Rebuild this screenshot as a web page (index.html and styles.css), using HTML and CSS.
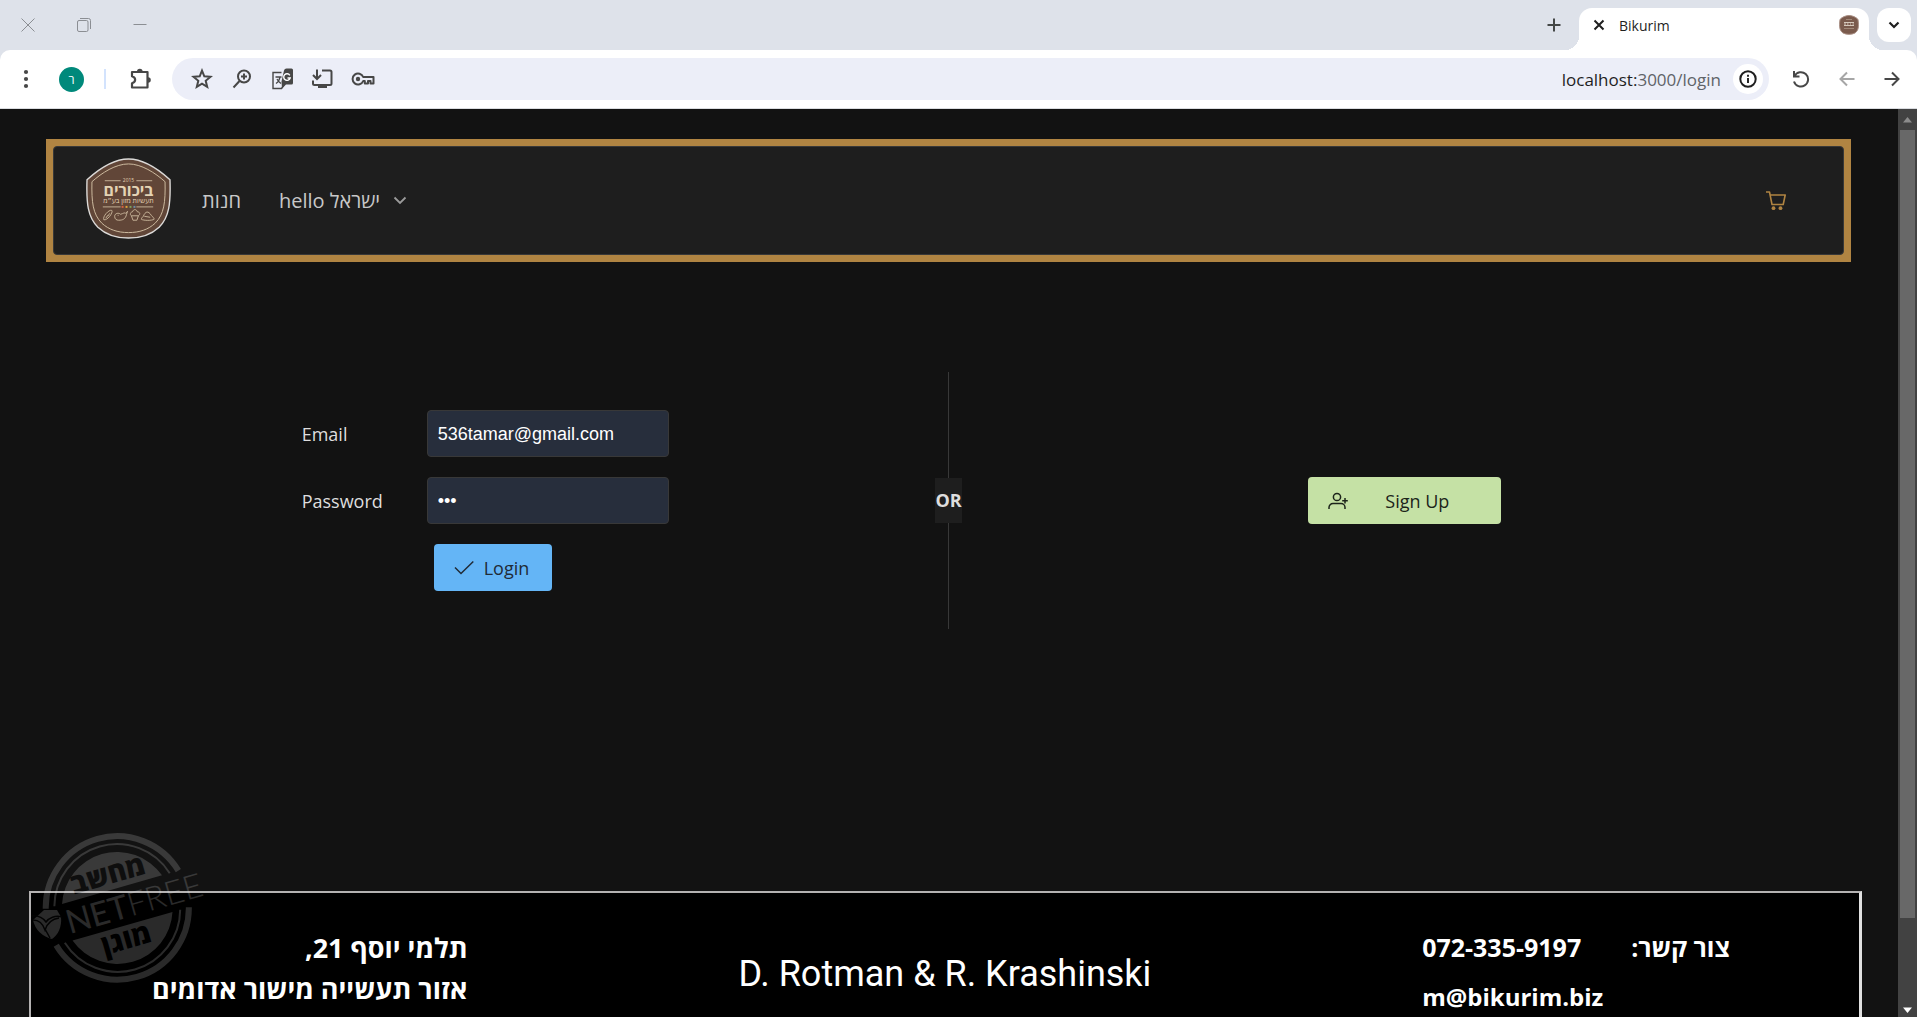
FILE: index.html
```html
<!DOCTYPE html>
<html lang="en">
<head>
<meta charset="utf-8">
<meta name="viewport" content="width=device-width, initial-scale=1">
<title>Bikurim</title>
<link rel="stylesheet" href="styles.css">
</head>
<body>
<div class="browser">
  <div class="tabstrip">
    <div class="window-controls">
      <button type="button" aria-label="Close window"><svg width="14" height="14" viewBox="0 0 14 14"><path d="M.5.5l13 13M13.5.5l-13 13"/></svg></button>
      <button type="button" aria-label="Restore window"><svg width="14" height="14" viewBox="0 0 14 14"><rect x=".5" y="2.5" width="10.500" height="11" rx="1.500"/><path d="M3 .5h8.500a2 2 0 0 1 2 2V11"/></svg></button>
      <button type="button" aria-label="Minimize window"><svg width="14" height="14" viewBox="0 0 14 14"><path d="M.5 6.500h13"/></svg></button>
    </div>
    <button type="button" class="new-tab" aria-label="New tab"><svg width="14" height="14" viewBox="0 0 14 14"><path d="M7 .5v13M.5 7h13" stroke="#444746" stroke-width="2"/></svg></button>
    <div class="tab">
      <button type="button" class="tab-close" aria-label="Close tab"><svg width="12" height="12" viewBox="0 0 12 12"><path d="M1.500 1.500l9 9M10.500 1.500l-9 9" stroke="#1f1f1f" stroke-width="2"/></svg></button>
      <span class="tab-title">Bikurim</span>
      <svg class="favicon" width="20" height="20" viewBox="0 0 20 20"><path d="M10 .5C13 .5 17 2 19 4.500c1 7 .5 11-3 13.500-3 1.800-9 1.800-12 0C.5 15.500 0 11.500 1 4.500 3 2 7 .5 10 .5z" fill="#7a5a4c" stroke="#a98f84" stroke-width="1"/><path d="M5 7.500h10M5 9h2m1 0h1.500M11 9h1m1.500 0H15M5 10.500h10" stroke="#d5c8bb" stroke-width="1.200"/><path d="M5 13.500h10M7 4.500h6" stroke="#a08878" stroke-width="1"/></svg>
    </div>
    <button type="button" class="tab-search" aria-label="Search tabs"><svg width="12" height="8" viewBox="0 0 12 8"><path d="M1.500 1.500L6 6l4.500-4.500" stroke="#1f1f1f" stroke-width="2.200"/></svg></button>
  </div>

  <div class="toolbar">
    <button type="button" class="menu" aria-label="Menu"><svg width="6" height="20" viewBox="0 0 6 20"><g fill="#474747"><circle cx="3" cy="3" r="2.100"/><circle cx="3" cy="10" r="2.100"/><circle cx="3" cy="17" r="2.100"/></g></svg></button>
    <button type="button" class="avatar">ר</button>
    <span class="toolbar-divider"></span>
    <button type="button" class="extensions" aria-label="Extensions"><svg width="22" height="22" viewBox="0 0 22 22"><path d="M2 4h15.500v15.500H2v-4.200c4.200-1.500 4.200-5.600 0-7.100z" stroke="#474747" stroke-width="2.200" stroke-linejoin="round"/><path d="M7 3.500a2.800 2.800 0 0 1 5.600 0zM18 9.200a2.800 2.800 0 0 1 0 5.600z" fill="#474747"/></svg></button>
    <div class="omnibox">
      <button type="button" aria-label="Bookmark"><svg width="22" height="22" viewBox="0 0 22 22"><path d="M11 2.600l2.300 5.700 6.200.5-4.800 4 1.500 6L11 15.600l-5.200 3.200 1.500-6-4.800-4 6.200-.5z" stroke="#474747" stroke-width="2"/></svg></button>
      <button type="button" aria-label="Zoom"><svg width="22" height="22" viewBox="0 0 22 22"><g stroke="#474747" stroke-width="2"><circle cx="13" cy="8.500" r="6"/><path d="M8.500 13L2.500 19.500M13 5.500v6M10 8.500h6"/></g></svg></button>
      <button type="button" aria-label="Translate"><svg width="22" height="22" viewBox="0 0 22 22"><path d="M10.500 4.500H2v16h8.500l2.500-3.500" stroke="#474747" stroke-width="1.400"/><path d="M13 2.500q.5-2 2.500-2h5a1.500 1.500 0 0 1 1.500 1.500v13a1.500 1.500 0 0 1-1.500 1.500H15l-4 4-.5-7z" fill="#474747"/><path d="M4.500 9h6M5 15.500c2.500-1.500 3.500-3.500 4-6.500M6 11c1 2 2.500 3.500 4 4.500" stroke="#474747" stroke-width="1.300"/><path d="M18.800 7.300a3.300 3.300 0 1 0 .4 2.700h-2.700" stroke="#fff" stroke-width="1.400"/></svg></button>
      <button type="button" aria-label="Install"><svg width="22" height="22" viewBox="0 0 22 22"><g stroke="#474747" stroke-width="2"><path d="M11 2.500h8A1.500 1.500 0 0 1 20.500 4v11.500A1.500 1.500 0 0 1 19 17H3.500A1.500 1.500 0 0 1 2 15.500V12.500M6 1.500v9M2 7l4 4 4-4"/></g><path d="M7 17h9v3H7z" fill="#474747"/></svg></button>
      <button type="button" aria-label="Passwords"><svg width="24" height="14" viewBox="0 0 24 14"><path d="M12.200 5H22.500v6.500h-3V9H17v2.500h-3.200V9h-1.600a5.500 5.500 0 1 1 0-4z" stroke="#474747" stroke-width="2" stroke-linejoin="round"/><circle cx="7" cy="7" r="2.200" fill="#474747"/></svg></button>
      <span class="url">localhost:<span class="url-path">3000/login</span></span>
      <button type="button" class="site-info" aria-label="Site information"><svg width="18" height="18" viewBox="0 0 18 18"><circle cx="9" cy="9" r="7.700" stroke="#1f1f1f" stroke-width="2"/><path d="M9 8v5M9 4.800v2" stroke="#1f1f1f" stroke-width="1.900"/></svg></button>
    </div>
    <button type="button" class="nav-button" aria-label="Reload"><svg width="18" height="18" viewBox="0 0 18 18"><path d="M2 1v5.500h5.500M2.500 6A7.200 7.200 0 1 1 2 11.500" stroke="#474747" stroke-width="2"/></svg></button>
    <button type="button" class="nav-button" aria-label="Back"><svg width="16" height="16" viewBox="0 0 16 16"><path d="M15.500 8H2M8 1.500L1.500 8 8 14.500" stroke="#a6a6a6" stroke-width="2"/></svg></button>
    <button type="button" class="nav-button" aria-label="Forward"><svg width="16" height="16" viewBox="0 0 16 16"><path d="M.5 8H14M8 1.500L14.500 8 8 14.500" stroke="#474747" stroke-width="2"/></svg></button>
  </div>

  <div class="viewport">
    <div class="page">
      <header class="navbar-frame">
        <nav class="navbar">
          <svg class="logo" width="85" height="81" viewBox="0 0 86 82" role="img" aria-label="ביכורים">
            <path d="M43 1C58 1 74 12 85 22c.8 24-.8 38-11 48-8 7.500-19 11-31 11s-23-3.500-31-11C1.800 60 .2 46 1 22 12 12 28 1 43 1z" fill="#614638" stroke="#dcdad8" stroke-width="1.400"/>
            <path d="M43 6C56 6 70 15 80 24c.5 21-1 33-10 42-7 6.500-16 9.500-27 9.500S23 72.500 16 66C7 57 5.500 45 6 24 16 15 30 6 43 6z" fill="none" stroke="#cdbb9f" stroke-width="1"/>
            <path d="M19 23h16M51 23h16M17 49.500h18M51 49.500h17" stroke="#cdbb9f" stroke-width=".9"/>
            <text x="43" y="24" font-size="5" class="logo-text">2015</text>
            <text x="43" y="38" font-size="16" class="logo-text logo-name">ביכורים</text>
            <text x="43" y="46" font-size="7" class="logo-text">תעשיות מזון בע״מ</text>
            <g><path d="M36 48.500h2v2h-2z" fill="#d8603f"/><path d="M40 48.500h2v2h-2z" fill="#e0a43c"/><path d="M44 48.500h2v2h-2z" fill="#7fa35a"/><path d="M48 48.500h2v2h-2z" fill="#6d8ea8"/></g>
            <g fill="none" stroke="#cdbb9f" stroke-width=".9" stroke-linejoin="round">
              <path d="M18 62.500c-1.500-3 5-10.500 8-9.500 2 1.500-4 10.500-8 9.500zM20 61l2-3M22 59l2-3"/>
              <path d="M29 59c0-3 4-4 6-2 3-1 4-2 5-1l2-2-1 3c-1 5-4 6-8 6-2 0-4-1-4-4zM32 58h1"/>
              <path d="M46 58.500c-2-1-1-4 1-4 1-3 4-3 5 0 3 0 3 3 1 4zM46 58.500l1.500 4.500h4l1.500-4.500"/>
              <path d="M56 62c0-1 1-2 2-3 2-5 5-6 8-1 1 1 3 3 3 4-2 1.500-11 1.500-13 0zM59 59l6 1"/>
            </g>
          </svg>
          <a class="nav-link" href="#shop" dir="rtl">חנות</a>
          <a class="nav-link user-link" href="#user"><span>hello ישראל</span><svg width="14" height="9" viewBox="0 0 14 9"><path d="M1.500 1.500L7 7l5.500-5.500" stroke="#9b9b9b" stroke-width="1.800"/></svg></a>
          <a class="cart" href="#cart" aria-label="Cart"><svg width="20" height="20" viewBox="0 0 20 20"><path d="M0 1h3.500L6 13.500h11.200L19.200 4H4.200" stroke="#b08442" stroke-width="1.600" stroke-linejoin="round"/><circle cx="7.500" cy="17.200" r="1.900" fill="#b08442"/><circle cx="14.500" cy="17.200" r="1.900" fill="#b08442"/></svg></a>
        </nav>
      </header>

      <main class="login">
        <form class="login-form">
          <label for="email">Email</label>
          <input id="email" type="email" value="536tamar@gmail.com">
          <label for="password">Password</label>
          <input id="password" type="password" value="123">
          <button class="login-button" type="button"><svg width="20" height="16" viewBox="0 0 20 16"><path d="M1 7.500L7 13.500 19.300 1.500" stroke="#212b36" stroke-width="1.500"/></svg>Login</button>
        </form>
        <div class="divider"><b>OR</b></div>
        <div class="signup">
          <button class="signup-button" type="button"><svg width="20" height="18" viewBox="0 0 20 18"><g stroke="#1c241a" stroke-width="1.500"><circle cx="9" cy="5" r="3.600"/><path d="M1 17v-1.500c0-2.200 1.700-4 4-4h8c2.300 0 4 1.800 4 4V17M17 6v5.500M14.200 8.700h5.600"/></g></svg><span>Sign Up</span></button>
        </div>
      </main>

      <footer class="footer">
        <address class="street" dir="rtl">תלמי יוסף 21,<br>אזור תעשייה מישור אדומים</address>
        <div class="owners">D. Rotman &amp; R. Krashinski</div>
        <div class="contact">
          <span>072-335-9197</span><span dir="rtl">צור קשר:</span>
          <a class="mail" href="mailto:m@bikurim.biz">m@bikurim.biz</a>
        </div>
      </footer>

      <svg class="stamp" width="180" height="152" viewBox="0 0 180 152" role="img" aria-label="NetFree">
        <g transform="translate(87 76)" fill="none" stroke="#e8e8e8">
          <g transform="rotate(-16)">
            <path d="M-69 -18A71.500 71.500 0 0 1 69 -18M-69 20A71.500 71.500 0 0 0 69 20" stroke-width="6"/>
            <path d="M-60 -18A62.500 62.500 0 0 1 60 -18M-60 20A62.500 62.500 0 0 0 60 20" stroke-width="2"/>
            <path d="M-52 -18A55 55 0 0 1 52 -18zM-52 20A55 55 0 0 0 52 20z" fill="#e8e8e8" stroke="none"/>
            <text x="0" y="-24" class="stamp-word">מחשב</text>
            <text x="0" y="43" class="stamp-word">מוגן</text>
            <text x="-53" y="13" class="stamp-net">NET<tspan class="stamp-free">FREE</tspan></text>
          </g>
          <path d="M-73 3h13l4 7c1 10-3 18-9 22-9-2-17-9-19-19z" fill="#e8e8e8" stroke="none"/>
          <path d="M-86 9c7-1 12 2 15 6 3-4 9-7 16-5M-84 13c6 0 10 4 12 10 2-6 7-11 14-12M-72 22l5 9" stroke="#111" stroke-width="1.500"/>
        </g>
      </svg>
    </div>
    <div class="scrollbar">
      <svg width="9" height="6" viewBox="0 0 9 6"><path d="M4.500 0L9 5.500H0z" fill="#8c8c8c"/></svg>
      <span class="thumb"></span>
      <svg width="9" height="6" viewBox="0 0 9 6"><path d="M4.500 6L9 .5H0z" fill="#fff"/></svg>
    </div>
  </div>
</div>
</body>
</html>
```
FILE: styles.css
```css
* { box-sizing: border-box; }

body {
  margin: 0;
  background: #121212;
  font-family: "Open Sans", "Noto Sans", sans-serif;
}

button {
  margin: 0;
  padding: 0;
  border: 0;
  background: none;
  font: inherit;
  color: inherit;
}

svg {
  display: block;
  flex: none;
  fill: none;
}

a { color: inherit; text-decoration: none; }

.browser {
  display: flex;
  flex-direction: column;
  height: 100vh;
  overflow: hidden;
  background: #dee2ea;
}

/* Tab strip */
.tabstrip {
  display: flex;
  flex: none;
  height: 50px;
  padding: 8px 6px 0 0;
}

.window-controls { display: flex; height: 34px; margin-right: auto; }

.window-controls button {
  display: grid;
  place-items: center;
  width: 56px;
}

.window-controls svg { stroke: #8b8e93; }

.new-tab, .tab-search {
  display: grid;
  place-items: center;
  width: 34px;
  height: 34px;
}

.new-tab { margin-right: 8px; }

.tab {
  position: relative;
  display: flex;
  align-items: center;
  width: 290px;
  padding: 0 10px 8px 14px;
  border-radius: 13px 13px 0 0;
  background: #fff;
}

.tab::before, .tab::after {
  content: "";
  position: absolute;
  bottom: 0;
  width: 14px;
  height: 14px;
}

.tab::before { right: 100%; background: radial-gradient(circle at 0 0, transparent 14px, #fff 14px); }
.tab::after { left: 100%; background: radial-gradient(circle at 100% 0, transparent 14px, #fff 14px); }

.tab-title { margin: 0 auto 0 14px; font-size: 14px; color: #1f1f1f; }

.tab-search { margin-left: 8px; border-radius: 12px; background: #fff; }

/* Toolbar */
.toolbar {
  display: flex;
  flex: none;
  align-items: center;
  height: 59px;
  padding: 0 17px 0 23px;
  border-bottom: 1px solid #dadce0;
  border-radius: 10px 10px 0 0;
  background: #fff;
}

.avatar {
  width: 25px;
  height: 25px;
  margin: 0 20px 0 30px;
  border-radius: 50%;
  background: #00897b;
  color: #fff;
  font-size: 12px;
  line-height: 25px;
}

.toolbar-divider { width: 2px; height: 20px; background: #d3e3fd; }

.extensions { margin: 0 20px 0 24px; }

.omnibox {
  display: flex;
  flex: 1;
  align-items: center;
  gap: 18px;
  height: 42px;
  margin-right: 23px;
  padding: 0 6px 0 19px;
  border-radius: 21px;
  background: #eceef8;
}

.url {
  margin-left: auto;
  margin-right: -6px;
  font-size: 17px;
  color: #1f1f1f;
}

.url-path { color: #5f6368; }

.site-info {
  display: grid;
  place-items: center;
  width: 30px;
  height: 30px;
  border-radius: 50%;
  background: #fff;
}

.nav-button + .nav-button { margin-left: 29px; }

/* Web page */
.viewport {
  display: flex;
  flex: 1;
  min-height: 0;
  background: #121212;
}

.page {
  position: relative;
  flex: 1;
  overflow: hidden;
  padding: 30px 36px 0 29px;
  color: #dedede;
}

.navbar-frame {
  margin: 0 11px 0 17px;
  border: 7px solid #b08442;
  background: #b08442;
}

.navbar {
  display: flex;
  align-items: center;
  height: 109px;
  padding: 0 57px 0 32px;
  border: 1px solid #383838;
  border-radius: 4px;
  background: #1e1e1e;
  font-size: 20px;
  color: #c8c8c8;
}

.logo { margin-bottom: 5px; }

.logo-text {
  fill: #e3d3b4;
  text-anchor: middle;
  font-family: "Open Sans", "Liberation Sans", sans-serif;
}

.logo-name { font-weight: 700; }

.nav-link { margin-left: 31px; }

.user-link {
  display: flex;
  align-items: center;
  gap: 13px;
  margin-left: 38px;
}

.cart { margin-left: auto; }

.login {
  display: grid;
  grid-template-columns: 1fr auto 1fr;
  align-items: center;
  margin: 110px 11px 0 17px;
  font-size: 18px;
}

.login-form {
  display: grid;
  grid-template-columns: 125px 242px;
  grid-auto-rows: 47px;
  row-gap: 20px;
  align-items: center;
  justify-content: center;
  padding-right: 11px;
}

.login-form input {
  width: 100%;
  height: 47px;
  padding: 2px 10px 0;
  border: 1px solid #383838;
  border-radius: 4px;
  background: #272e3c;
  color: #fff;
  font-family: "Liberation Sans", Arial, sans-serif;
  font-size: 18px;
}

.login-button, .signup-button {
  display: flex;
  align-items: center;
  height: 47px;
  border-radius: 4px;
}

.login-button {
  grid-column: 1 / -1;
  gap: 10px;
  width: 118px;
  margin-left: 132px;
  padding: 0 20px;
  background: #64b5f6;
  color: #212b36;
}

.divider {
  display: flex;
  align-items: center;
  height: 257px;
  background: linear-gradient(#383838, #383838) center / 1px 100% no-repeat;
}

.divider b {
  padding: 10px 0;
  background: #1e1e1e;
  line-height: 25px;
}

.signup {
  display: flex;
  justify-content: center;
  padding-right: 4px;
}

.signup-button {
  width: 193px;
  padding: 0 20px;
  background: #c5e1a5;
  color: #1c241a;
}

.signup-button span { flex: 1; padding-left: 6px; }

/* Footer banner */
.footer {
  display: flex;
  justify-content: space-between;
  height: 220px;
  margin-top: 262px;
  padding: 34px 129px 0 121px;
  border: 2px solid #b4b2b2;
  border-right: 3px solid #e0e0e0;
  background: #000;
  color: #fff;
  font-size: 25px;
  font-weight: 700;
  line-height: 41px;
}

.street { font-size: 27px; font-style: normal; }

.owners {
  padding-top: 27px;
  font-family: Roboto, sans-serif;
  font-size: 36px;
  font-weight: 400;
}

.contact {
  display: grid;
  grid-template-columns: auto auto;
  column-gap: 50px;
  row-gap: 8px;
  align-content: start;
}

.mail { grid-column: 1 / -1; font-size: 24px; }

/* Filter stamp laid over the page corner */
.stamp {
  position: absolute;
  left: 30px;
  bottom: 34px;
  opacity: .18;
}

.stamp-word {
  fill: #000;
  stroke: none;
  text-anchor: middle;
  font-size: 28px;
  font-weight: 800;
}

.stamp-net {
  fill: #e8e8e8;
  stroke: none;
  font-family: Lato, sans-serif;
  font-size: 33px;
}

.stamp-free { font-weight: 300; }

/* Scrollbar */
.scrollbar {
  display: flex;
  flex: none;
  flex-direction: column;
  align-items: center;
  width: 19px;
  padding: 8px 0 4px;
  background: #424242;
}

.thumb {
  width: 15px;
  height: 88%;
  margin: 7px 0 auto;
  background: #686868;
}
```
